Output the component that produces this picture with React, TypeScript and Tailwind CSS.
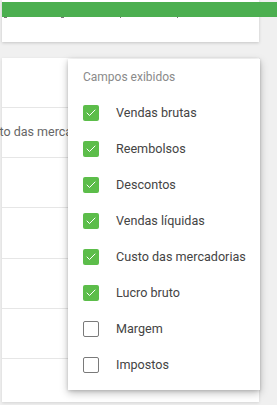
import { Check } from "lucide-react"

const fields = [
  { label: "Vendas brutas", checked: true },
  { label: "Reembolsos", checked: true },
  { label: "Descontos", checked: true },
  { label: "Vendas líquidas", checked: true },
  { label: "Custo das mercadorias", checked: true },
  { label: "Lucro bruto", checked: true },
  { label: "Margem", checked: false },
  { label: "Impostos", checked: false }
]

const rowHeights = ["h-[50px]", "h-[50px]", "h-[50px]", "h-[51px]", "h-[50px]", "h-[50px]", "h-[43px]"]

export default function App() {
  return (
    <div className="relative h-[405px] w-[277px] overflow-hidden bg-[#f0f0f0] font-['Roboto',sans-serif]">
      <div className="ml-[2px] h-[42px] w-[257px] bg-white pt-[17px] shadow-[0_1px_3px_rgba(0,0,0,0.18)]">
        {/* bits of text peeking out under the snackbar */}
        <div className="flex items-start pl-[2px]">
          <span className="h-[1px] w-[3px] bg-[#777]" />
          <span className="ml-[54px] h-[1px] w-[3px] bg-[#777]" />
          <span className="ml-[56px] h-[1px] w-[1px] bg-[#777]" />
          <span className="ml-[56px] h-[1px] w-[1px] bg-[#777]" />
        </div>
      </div>

      <div className="absolute left-[2px] right-0 top-[2px] h-[15px] bg-[#4caf50]" />

      <div className="ml-[2px] mt-[16px] w-[257px] bg-white shadow-[0_1px_3px_rgba(0,0,0,0.12)]">
        {rowHeights.map((h, i) => (
          <div
            key={i}
            className={`${h} flex items-center ${i < rowHeights.length - 1 ? "border-b border-[#e6e6e6]" : ""}`}
          >
            {i === 1 ? (
              <span className="-ml-[24px] whitespace-nowrap text-[12.5px] text-[#666]">Custo das mercadorias</span>
            ) : null}
          </div>
        ))}
      </div>

      <div className="absolute left-[68px] top-[59px] w-[192px] bg-white pb-[7px] shadow-[0_3px_8px_rgba(0,0,0,0.25),0_1px_3px_rgba(0,0,0,0.15)]">
        <div className="flex h-[36px] items-center pl-[15px] text-[12px] text-[#8a8a8a]">Campos exibidos</div>
        {fields.map((f) => (
          <div key={f.label} className="flex h-[36px] items-center pl-[15px]">
            {f.checked ? (
              <span className="flex h-[16px] w-[16px] items-center justify-center rounded-[2px] bg-[#5cbd4a]">
                <Check size={12} strokeWidth={2} color="#fff" />
              </span>
            ) : (
              <span className="h-[16px] w-[16px] rounded-[2px] border-[1.5px] border-[#7a7a7a]" />
            )}
            <span className="ml-[17px] whitespace-nowrap text-[12.6px] text-[#444]">{f.label}</span>
          </div>
        ))}
      </div>
    </div>
  )
}
